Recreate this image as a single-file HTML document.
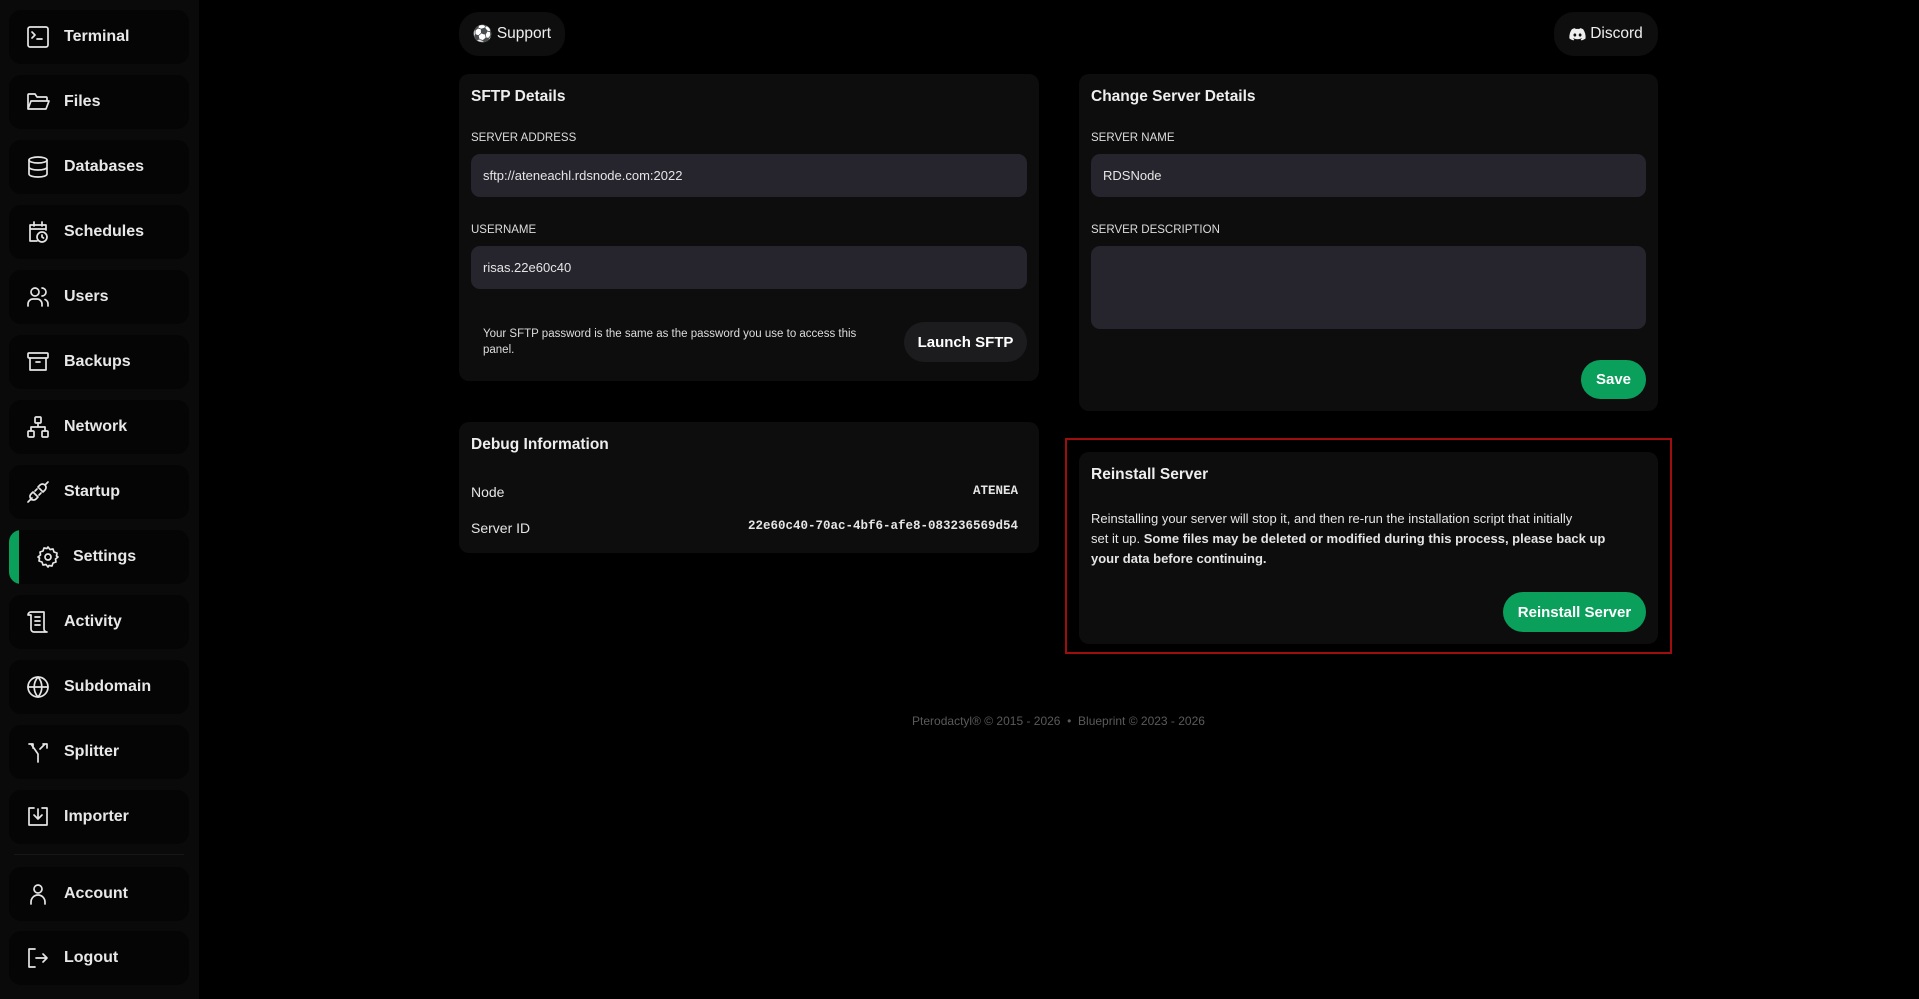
<!DOCTYPE html>
<html><head><meta charset="utf-8"><style>
*{box-sizing:border-box;margin:0;padding:0}
body{width:1919px;height:999px;background:#000;font-family:"Liberation Sans",sans-serif;color:#e5e5e5;position:relative;overflow:hidden}
.sb{position:absolute;left:0;top:0;width:199px;height:999px;background:#0a0a0a}
.it{position:absolute;left:9px;width:180px;height:54px;background:#050505;border-radius:12px;display:flex;align-items:center;font-weight:bold;font-size:16px;color:#e8e8e8}
.it svg{position:absolute;left:17px;top:15px;width:24px;height:24px;fill:none;stroke:#e5e5e5;stroke-width:1.7;stroke-linecap:round;stroke-linejoin:round}
.it span{position:absolute;left:55px}
.card{position:absolute;background:#0d0d0d;border-radius:10px}
.t{position:absolute;font-weight:bold;font-size:15.5px;color:#eee}
.lb{position:absolute;font-size:11.5px;color:#ddd}
.in{position:absolute;background:#26242d;border-radius:9px;font-size:13px;color:#e5e5e5;padding-left:12px;display:flex;align-items:center}
.btn{position:absolute;border-radius:20px;display:flex;align-items:center;justify-content:center;font-weight:bold;font-size:15px;color:#fff}
.g{background:#0a9f5b}
</style></head><body>
<div class="sb">
<div class="it" style="top:10px"><svg viewBox="0 0 24 24"><rect x="2" y="2" width="20" height="20" rx="2"/><path d="M6 7l3 3-3 3M11 14h5"/></svg><span>Terminal</span></div>
<div class="it" style="top:75px"><svg viewBox="0 0 24 24"><path d="M2 19V5a1 1 0 011-1h6l2 3h9a1 1 0 011 1v3M2 19l3-8h18l-3 8z"/></svg><span>Files</span></div>
<div class="it" style="top:140px"><svg viewBox="0 0 24 24"><ellipse cx="12" cy="5" rx="9" ry="3"/><path d="M3 5v14c0 1.7 4 3 9 3s9-1.3 9-3V5M3 12c0 1.7 4 3 9 3s9-1.3 9-3"/></svg><span>Databases</span></div>
<div class="it" style="top:205px"><svg viewBox="0 0 24 24"><path d="M11 21H4V5h16v5M8 2v4M16 2v4M4 9h16"/><circle cx="16" cy="17" r="5"/><path d="M16 15v2l1.5 1"/></svg><span>Schedules</span></div>
<div class="it" style="top:270px"><svg viewBox="0 0 24 24"><circle cx="9" cy="7" r="4"/><path d="M2 21v-2a5 5 0 015-5h4a5 5 0 015 5v2M16 3a4 4 0 010 8M22 21v-2a5 5 0 00-3-4.5"/></svg><span>Users</span></div>
<div class="it" style="top:335px"><svg viewBox="0 0 24 24"><rect x="2" y="3" width="20" height="5" rx="1"/><path d="M4 8v12h16V8M10 12h4"/></svg><span>Backups</span></div>
<div class="it" style="top:400px"><svg viewBox="0 0 24 24"><rect x="9" y="2" width="6" height="6" rx="1"/><rect x="2" y="16" width="6" height="6" rx="1"/><rect x="16" y="16" width="6" height="6" rx="1"/><path d="M12 8v4M5 16v-4h14v4"/></svg><span>Network</span></div>
<div class="it" style="top:465px"><svg viewBox="0 0 24 24"><path d="M2 22l4-4M7 12l5 5-2 2a3.5 3.5 0 01-5-5zM17 12l-5-5 2-2a3.5 3.5 0 015 5zM19 5l3-3M9 11l2-2M13 15l2-2"/></svg><span>Startup</span></div>
<div class="it" style="top:530px;overflow:hidden"><div style="position:absolute;left:0;top:0;width:10px;height:54px;background:#0a9f5b"></div><svg viewBox="0 0 24 24" style="left:27px"><circle cx="12" cy="12" r="3"/><path d="M12 2l2 2.5 3-.5 1 3 3 1-.5 3L22 12l-2.5 2 .5 3-3 1-1 3-3-.5L12 22l-2-2.5-3 .5-1-3-3-1 .5-3L2 12l2.5-2L4 7l3-1 1-3 3 .5z"/></svg><span style="left:64px">Settings</span></div>
<div class="it" style="top:595px"><svg viewBox="0 0 24 24"><path d="M5 2h13v17a3 3 0 003 3H8a3 3 0 01-3-3V5M2 5a3 3 0 013-3M2 5h3M9 7h5M9 11h5M9 15h5"/></svg><span>Activity</span></div>
<div class="it" style="top:660px"><svg viewBox="0 0 24 24"><circle cx="12" cy="12" r="10"/><path d="M2 12h20M12 2a15 15 0 010 20M12 2a15 15 0 000 20"/></svg><span>Subdomain</span></div>
<div class="it" style="top:725px"><svg viewBox="0 0 24 24"><path d="M12 22v-8L5 4M3 4h4v4M19 4l-5 5M17 4h4v4"/></svg><span>Splitter</span></div>
<div class="it" style="top:790px"><svg viewBox="0 0 24 24"><path d="M8 3H3v17h18V3h-5M12 4v10M8 10l4 4 4-4"/></svg><span>Importer</span></div>
<div style="position:absolute;left:14px;top:854px;width:170px;height:1px;background:#161616"></div>
<div class="it" style="top:867px"><svg viewBox="0 0 24 24"><circle cx="12" cy="7" r="4"/><path d="M5 22v-2a6 6 0 0114 0v2"/></svg><span>Account</span></div>
<div class="it" style="top:931px"><svg viewBox="0 0 24 24"><path d="M9 3H3v18h6M10 12h11M17 8l4 4-4 4"/></svg><span>Logout</span></div>
</div>

<div class="btn" style="left:459px;top:12px;width:106px;height:44px;background:#0e0e0e;font-weight:normal;font-size:15.5px;color:#eee"><span style="font-size:16px;margin-right:4px">⚽</span>Support</div>
<div class="btn" style="left:1554px;top:12px;width:104px;height:44px;background:#0e0e0e;font-weight:normal;font-size:15.5px;color:#eee"><svg width="17" height="13" viewBox="0 0 24 18" style="margin-right:4px"><path fill="#eee" d="M20 1.5A19 19 0 0015.4 0l-.6 1.2a18 18 0 00-5.6 0L8.6 0A19 19 0 004 1.5C1 6 .3 10.3.6 14.6A19 19 0 006.3 17.5l1.2-1.9a12 12 0 01-1.9-.9l.5-.4a13.5 13.5 0 0011.8 0l.5.4a12 12 0 01-1.9.9l1.2 1.9a19 19 0 005.7-2.9c.4-5-.8-9.3-3.4-13.1zM8.3 12c-1.1 0-2-1-2-2.3s.9-2.3 2-2.3 2 1 2 2.3-.9 2.3-2 2.3zm7.4 0c-1.1 0-2-1-2-2.3s.9-2.3 2-2.3 2 1 2 2.3-.9 2.3-2 2.3z"/></svg>Discord</div>

<div class="card" style="left:459px;top:74px;width:580px;height:307px">
<div class="t" style="left:12px;top:14px">SFTP Details</div>
<div class="lb" style="left:12px;top:58px">SERVER ADDRESS</div>
<div class="in" style="left:12px;top:80px;width:556px;height:43px">sftp://ateneachl.rdsnode.com:2022</div>
<div class="lb" style="left:12px;top:150px">USERNAME</div>
<div class="in" style="left:12px;top:172px;width:556px;height:43px">risas.22e60c40</div>
<div style="position:absolute;left:24px;top:252px;width:400px;font-size:11.5px;line-height:16px;color:#ddd">Your SFTP password is the same as the password you use to access this panel.</div>
<div class="btn" style="left:445px;top:248px;width:123px;height:40px;background:#1c1c1f">Launch SFTP</div>
</div>

<div class="card" style="left:459px;top:422px;width:580px;height:131px">
<div class="t" style="left:12px;top:14px">Debug Information</div>
<div style="position:absolute;left:12px;top:62px;font-size:14px">Node</div>
<div style="position:absolute;right:21px;top:62px;font-size:12.5px;font-family:'Liberation Mono',monospace;font-weight:bold">ATENEA</div>
<div style="position:absolute;left:12px;top:98px;font-size:14px">Server ID</div>
<div style="position:absolute;right:21px;top:97px;font-size:12.5px;font-family:'Liberation Mono',monospace;font-weight:bold">22e60c40-70ac-4bf6-afe8-083236569d54</div>
</div>

<div class="card" style="left:1079px;top:74px;width:579px;height:337px">
<div class="t" style="left:12px;top:14px">Change Server Details</div>
<div class="lb" style="left:12px;top:58px">SERVER NAME</div>
<div class="in" style="left:12px;top:80px;width:555px;height:43px">RDSNode</div>
<div class="lb" style="left:12px;top:150px">SERVER DESCRIPTION</div>
<div class="in" style="left:12px;top:172px;width:555px;height:83px"></div>
<div class="btn g" style="left:502px;top:286px;width:65px;height:39px">Save</div>
</div>

<div style="position:absolute;left:1065px;top:438px;width:607px;height:216px;border:2px solid #a00d0d"></div>
<div class="card" style="left:1079px;top:452px;width:579px;height:192px">
<div class="t" style="left:12px;top:14px">Reinstall Server</div>
<div style="position:absolute;left:12px;top:57px;white-space:nowrap;font-size:13px;line-height:20px;color:#e5e5e5">Reinstalling your server will stop it, and then re-run the installation script that initially<br>set it up. <b>Some files may be deleted or modified during this process, please back up<br>your data before continuing.</b></div>
<div class="btn g" style="left:424px;top:140px;width:143px;height:40px">Reinstall Server</div>
</div>

<div style="position:absolute;left:459px;width:1199px;top:714px;text-align:center;font-size:12px;color:#5a5a5a">Pterodactyl® © 2015 - 2026 &nbsp;•&nbsp; Blueprint © 2023 - 2026</div>
</body></html>
